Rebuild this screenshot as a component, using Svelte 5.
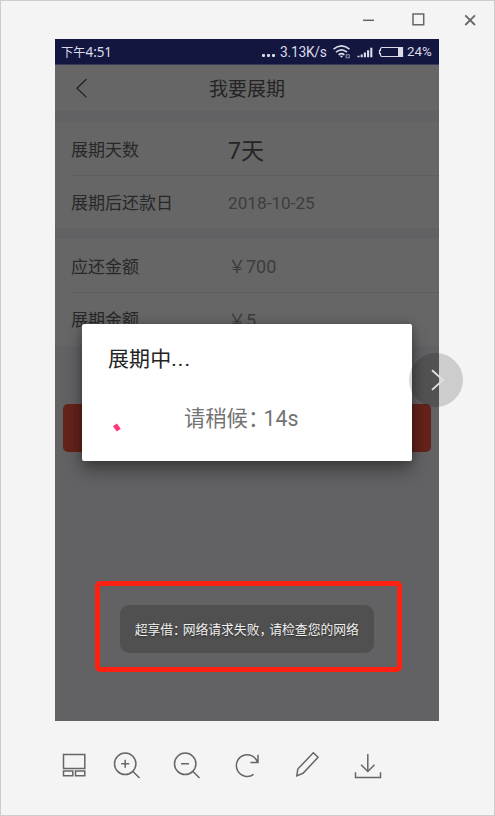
<script>
  const groups = [
    [
      { label: '展期天数', value: '7天', kind: 'big' },
      { label: '展期后还款日', value: '2018-10-25', kind: 'date' }
    ],
    [
      { label: '应还金额', value: '700', kind: 'money' },
      { label: '展期金额', value: '5', kind: 'money' }
    ]
  ];
</script>

<div class="window">
  <header class="titlebar">
    <svg width="130" height="38" viewBox="0 0 130 38" fill="none" stroke="#666" stroke-width="1.5">
      <path d="M8 20.3h11" />
      <path d="M58 14h10.7v10.8H58z" />
      <path d="M110.3 15.3l9.7 9.7M120 15.3l-9.7 9.7" stroke-width="1.8" />
    </svg>
  </header>

  <main class="phone">
    <div class="status">
      <span class="clock">下午<span class="digits">4:51</span></span>
      <span class="dots"><i></i><i></i><i></i></span>
      <span class="speed">3.13K/s</span>
      <svg class="icons" width="76" height="26" viewBox="0 0 76 26" fill="none" stroke="#dcdce8">
        <path d="M3.5 10.2Q11.5 3.6 19.5 10.2M6 13.2Q11.5 8.6 17 13.2M8.6 15.8Q11.5 13.4 14.4 15.8" stroke-width="1.5" />
        <path d="M9.7 16.8h3.6l-1.8 2z" fill="#dcdce8" stroke="none" />
        <path d="M16.2 15.7h3v3h-3z" stroke="#8f91ad" stroke-width="1.1" />
        <path d="M28.5 18.2v-1.4M31.7 18.2v-2.6M34.9 18.2v-4.6M38.1 18.2v-7M41.3 18.2v-9.4" stroke-width="2.1" />
        <path d="M52 8.5h20.5v9H52q-1.5 0-1.5-1.5v-1.3h-1v-3.4h1V10q0-1.5 1.5-1.5z" stroke-width="1.2" />
        <path d="M68 8.5h5v9h-5z" fill="#dcdce8" stroke="none" />
      </svg>
      <span class="percent">24%</span>
    </div>

    <nav class="nav">
      <svg width="14" height="22" viewBox="0 0 14 22" fill="none" stroke="#202020" stroke-width="1.2">
        <path d="M11.5 2L2 11.2L11.5 20.4" />
      </svg>
      <h1>我要展期</h1>
    </nav>

    {#each groups as group}
      <section>
        {#each group as row}
          <div class="row">
            <span class="label">{row.label}</span>
            <span class="value {row.kind}">{#if row.kind === 'money'}<span class="yen">￥</span>{/if}{row.value}</span>
          </div>
        {/each}
      </section>
    {/each}

    <div class="submit"></div>

    <div class="dialog">
      <h2>展期中<span class="ellipsis">...</span></h2>
      <div class="progress">
        <svg width="12" height="12" viewBox="0 0 12 12"><path d="M2 4.2L5.9 1.5L9.7 6.7L5.8 9.5Z" fill="#ff3478" /></svg>
        <p>请稍候<span class="colon">：</span>14s</p>
      </div>
    </div>

    <div class="highlight">
      <div class="toast">超享借<span class="colon">：</span>网络请求失败<span class="comma">，</span>请检查您的网络</div>
    </div>
  </main>

  <div class="next">
    <svg width="54" height="54" viewBox="0 0 54 54" fill="none" stroke="#e2e2e2" stroke-width="1.8">
      <path d="M23 17.3L34 27L23 36.8" />
    </svg>
  </div>

  <footer class="toolbar">
    <svg viewBox="0 0 30 30"><path d="M4.5 4.5h21.3v14H4.5zM4.5 21h9.3v4.7H4.5zM16.5 21h9.3v4.7h-9.3z" /></svg>
    <svg viewBox="0 0 30 30"><circle cx="14.2" cy="13.8" r="10.7" /><path d="M22 21.5l6.5 6.5M10.2 13.8h8M14.2 9.8v8" /></svg>
    <svg viewBox="0 0 30 30"><circle cx="14.2" cy="13.8" r="10.7" /><path d="M22 21.5l6.5 6.5M10 13.8h8" /></svg>
    <svg viewBox="0 0 30 30"><path d="M22.6 24.3A10.8 10.8 0 1 1 26.4 12.1M27 4.8v7.7h-7.5" /></svg>
    <svg viewBox="0 0 30 30"><path d="M22.3 2.7l4.8 4.6L12 23.3L5.8 25.9l1-6.8z" /></svg>
    <svg viewBox="0 0 30 30"><path d="M16.8 4v17.5M10.1 14.8l6.7 6.7l6.7-6.7M4.5 22.2v5.3h25v-5.3" /></svg>
  </footer>
</div>

<style>
  .window {
    box-sizing: border-box;
    position: relative;
    width: 495px;
    height: 816px;
    border: 1px solid #cdcdcd;
    background: #f4f4f4;
    display: flex;
    flex-direction: column;
    align-items: center;
    font-family: Roboto, "Noto Sans CJK SC", sans-serif;
  }
  svg { display: block; flex: none; overflow: visible; }
  .titlebar {
    width: 100%;
    height: 38px;
    display: flex;
    justify-content: flex-end;
  }
  .titlebar svg { margin-right: 9px; margin-top: -1px; }
  .phone {
    position: relative;
    width: 384px;
    height: 682px;
    align-self: flex-start;
    margin-left: 54px;
    background: #626264;
    flex: none;
  }
  .status {
    height: 26px;
    box-sizing: border-box;
    background: #131740;
    border-bottom: 1px solid #363a52;
    color: #dcdce8;
    display: flex;
    align-items: center;
    font-size: 13px;
    padding-left: 6px;
    white-space: nowrap;
  }
  .clock { width: 201px; font-size: 12.3px; }
  .digits { font-family: "Noto Sans", sans-serif; font-size: 13.5px; letter-spacing: -.1px; }
  .dots { display: flex; gap: 2px; width: 18px; padding-top: 8px; }
  .dots i { width: 3px; height: 3px; border-radius: 1px; background: #dcdce8; }
  .speed { width: 46px; letter-spacing: -.25px; font-size: 13.8px; }
  .icons { margin-left: 4px; }
  .percent { font-size: 13.3px; margin-left: 1px; }
  .nav {
    position: relative;
    height: 46px;
    background: #666;
    display: flex;
    align-items: center;
    padding-left: 20px;
  }
  h1 {
    flex: 1;
    margin: 0 34px 0 0;
    padding-top: 4px;
    text-align: center;
    font-size: 19px;
    line-height: 28px;
    font-weight: 400;
    color: #242424;
  }
  section { margin-top: 11px; background: #666; padding-left: 16px; }
  .row { height: 53px; display: flex; align-items: center; box-sizing: border-box; padding-bottom: 1px; }
  .row + .row { border-top: 1px solid #5e5e60; }
  section + section .row:last-child { height: 54px; padding-bottom: 2px; }
  .label { width: 157px; font-size: 17px; color: #282828; }
  .value { font-size: 18px; color: #3d3d3d; }
  .big { font-size: 23px; color: #242424; padding-top: 1px; }
  .date { font-size: 17.2px; padding-top: 2px; }
  .submit { margin: 58px 8px 0; height: 48px; border-radius: 5px; background: #64231b; }
  .dialog {
    position: absolute;
    left: 27px;
    top: 285px;
    width: 330px;
    height: 137px;
    box-sizing: border-box;
    padding: 18px 26px;
    background: #fff;
    border-radius: 2px;
    box-shadow: 0 9px 18px rgba(0, 0, 0, .36), 0 0 8px rgba(0, 0, 0, .22);
  }
  h2 { margin: 0; font-size: 21px; line-height: 34px; font-weight: 400; color: #242424; letter-spacing: .1px; }
  .ellipsis { letter-spacing: 1px; }
  .progress { display: flex; align-items: center; margin-top: 26px; height: 34px; }
  .progress svg { margin: 17px 0 0 3px; }
  .progress p { margin: 0 0 0 61px; font-size: 21.3px; line-height: 34px; color: #737373; white-space: nowrap; }
  .colon, .comma { font-feature-settings: "halt"; }
  .progress .colon { margin-right: 5px; }
  .highlight {
    position: absolute;
    left: 40px;
    top: 542px;
    width: 306.5px;
    height: 91px;
    box-sizing: border-box;
    border: 5px solid #ff2012;
    border-radius: 5px;
    display: flex;
    align-items: center;
    justify-content: center;
  }
  .toast {
    width: 254px;
    height: 48px;
    margin: 4px 3px 0 0;
    border-radius: 9px;
    background: #505050;
    color: #f0f0f0;
    font-size: 12.8px;
    line-height: 49px;
    text-align: center;
    white-space: nowrap;
    text-shadow: 0 1px 2px rgba(0, 0, 0, .5);
  }
  .toast .colon { margin-right: 3.2px; }
  .toast .comma { margin-right: 3.4px; }
  .next {
    position: absolute;
    left: 408px;
    top: 352px;
    width: 54px;
    height: 54px;
    border-radius: 50%;
    background: rgba(0, 0, 0, .155);
  }
  .toolbar { align-self: flex-start; display: flex; gap: 30px; margin: 29px 0 0 58px; }
  .toolbar svg { width: 30px; height: 30px; fill: none; stroke: #666; stroke-width: 1.5; }
  .toolbar svg:first-child { margin-right: -8px; }
</style>
